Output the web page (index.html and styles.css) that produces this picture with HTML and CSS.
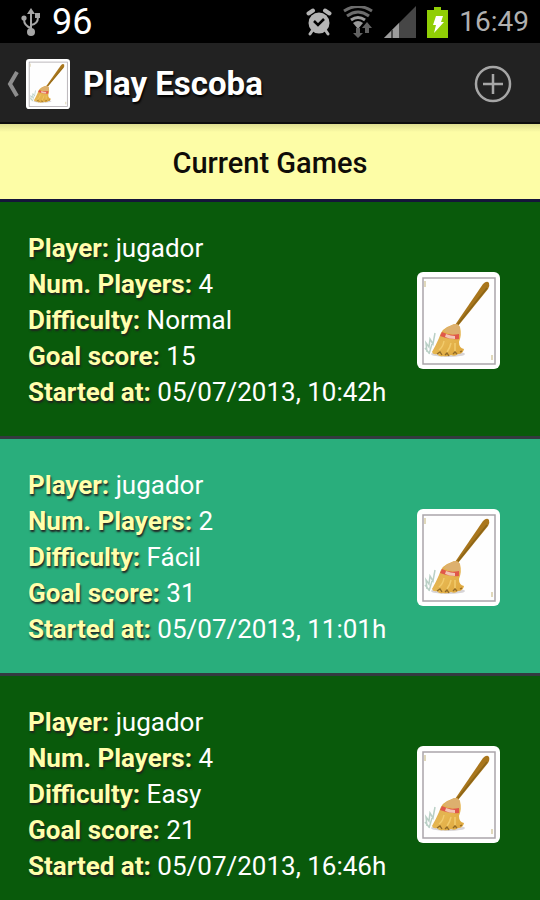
FILE: index.html
```html
<!DOCTYPE html>
<html lang="en">
<head>
<meta charset="utf-8">
<meta name="viewport" content="width=device-width, initial-scale=1">
<title>Play Escoba</title>
<link rel="stylesheet" href="styles.css">
</head>
<body>
<svg class="defs" aria-hidden="true">
  <defs>
    <linearGradient id="straw" x1="0" y1="0" x2="1" y2="1">
      <stop offset="0" stop-color="#d9a852"/>
      <stop offset="0.5" stop-color="#e6b650"/>
      <stop offset="1" stop-color="#dda53a"/>
    </linearGradient>
    <symbol id="broom-card" viewBox="0 0 83 97">
      <rect width="83" height="97" rx="6" fill="#fff"/>
      <rect x="6" y="6" width="72" height="86" fill="#fefefe" stroke="#aaa5aa" stroke-width="1.5"/>
      <path d="M8 9v6M75 83v5" stroke="#d6cba5" stroke-width="1.5"/>
      <path d="M10 80l-1-9 3 4 1-8 3 5 2-11M12 82l3-10M8 76l4 5" fill="none" stroke="#a9c4b8" stroke-width="1.5" opacity=".8"/>
      <ellipse cx="31" cy="82" rx="17" ry="3" fill="#bdb7ba" opacity=".6"/>
      <path d="M38 53L66 12q4-4 6-1 1 3-1 6L41 54z" fill="#a9761c"/>
      <path d="M41 52L70 16" stroke="#8a6518" stroke-width="1.3"/>
      <path d="M35 53q5-3 8 2 2 8-1 15 0 6 5 7-1 5-6 5-3 3-7 1-4 2-8 1-4 1-6-2-4 1-5-2 4-7 7-14 2-10 13-13z" fill="url(#straw)"/>
      <path d="M35 53q5-3 8 2l0 8q-9 0-16-4 3-4 8-6z" fill="#ddb06e"/>
      <path d="M25 60q7 4 17 2v5q-10 1-19-3z" fill="#e0574a"/>
      <path d="M29 62q5 2 9 2v3q-6 0-10-2z" fill="#f3c6b4"/>
      <path d="M27 69q-1 6-5 9M34 71q-1 5-4 9M38 71v8" fill="none" stroke="#f2cb6c" stroke-width="1.5"/>
      <path d="M20 82l3-2 2 3M28 83l2-2 2 3M36 82l2-2 2 2M43 80l2-1" fill="none" stroke="#906a28" stroke-width="1.3"/>
    </symbol>
  </defs>
</svg>

<div class="screen">
  <div class="status">
    <svg class="usb" viewBox="0 0 20 30" aria-hidden="true">
      <g fill="none" stroke="#a6a6a6" stroke-width="2">
        <path d="M10 5v20M10 21q-7-2-7-9M10 18q7-1 7-8"/>
      </g>
      <path d="M10 1l4 6H6z" fill="#a6a6a6"/>
      <circle cx="10" cy="25" r="4" fill="#a6a6a6"/>
      <circle cx="3" cy="11" r="2.6" fill="#a6a6a6"/>
      <path d="M14 6h5v5h-5z" fill="#a6a6a6"/>
    </svg>
    <span class="level">96</span>
    <svg class="alarm" viewBox="0 0 26 28" aria-hidden="true">
      <g fill="none" stroke="#b4b4b4" stroke-linecap="round">
        <path d="M2.500 5.500L7 2.500M23.500 5.500L19 2.500" stroke-width="4"/>
        <path d="M6 23l-2 3M20 23l2 3" stroke-width="3"/>
      </g>
      <circle cx="13" cy="15" r="10.500" fill="#b4b4b4"/>
      <path d="M8 13l4 4 6-6" fill="none" stroke="#000" stroke-width="2.500"/>
    </svg>
    <svg class="wifi" viewBox="0 0 30 32" aria-hidden="true">
      <g fill="none" stroke="#6c6c6c" stroke-width="3">
        <path d="M1 5q14-9 28 0M4 10q11-8 22 0"/>
        <path d="M8 14q7-5 14 0" stroke="#999"/>
      </g>
      <path d="M10 17q5-4 10 0l-5 6z" fill="#9a9a9a"/>
      <path d="M13 22h4v5h3l-5 5-5-5h3zM22 27v-5h-3l5-6 5 6h-3v5z" fill="#626262"/>
    </svg>
    <svg class="signal" viewBox="0 0 32 32" aria-hidden="true">
      <path d="M0 32L32 0v32z" fill="#464646"/>
      <path d="M0 32L15 17v15z" fill="#9c9c9c"/>
      <path d="M8 24v8" stroke="#333" stroke-width="1.500"/>
    </svg>
    <svg class="battery" viewBox="0 0 21 31" aria-hidden="true">
      <path d="M7 0h7v3h7v28H0V3h7z" fill="#90ce05"/>
      <path d="M9 9h7l-2 6h3L7 26l2-8H6z" fill="#fff"/>
    </svg>
    <time class="clock">16:49</time>
  </div>

  <header class="bar">
    <a class="home" href="#" aria-label="Back">
      <svg class="chevron" viewBox="0 0 14 26" aria-hidden="true">
        <path d="M11 1L4 13l7 12" fill="none" stroke="#8d8d8d" stroke-width="4"/>
      </svg>
      <svg class="logo" viewBox="0 0 83 97" preserveAspectRatio="none" aria-hidden="true"><use href="#broom-card"/></svg>
    </a>
    <h1 class="title">Play Escoba</h1>
    <button class="add" type="button" aria-label="New game">
      <svg viewBox="0 0 38 38" aria-hidden="true">
        <circle cx="19" cy="19" r="17" fill="none" stroke="#a6a6a6" stroke-width="2.500"/>
        <path d="M19 9v20M9 19h20" stroke="#a6a6a6" stroke-width="2.500"/>
      </svg>
    </button>
  </header>

  <h2 class="section">Current Games</h2>

  <ul class="games">
    <li class="game">
      <dl class="info">
        <div><dt>Player:</dt> <dd>jugador</dd></div>
        <div><dt>Num. Players:</dt> <dd>4</dd></div>
        <div><dt>Difficulty:</dt> <dd>Normal</dd></div>
        <div><dt>Goal score:</dt> <dd>15</dd></div>
        <div><dt>Started at:</dt> <dd>05/07/2013, 10:42h</dd></div>
      </dl>
      <svg class="card" aria-hidden="true"><use href="#broom-card"/></svg>
    </li>
    <li class="game game-alt">
      <dl class="info">
        <div><dt>Player:</dt> <dd>jugador</dd></div>
        <div><dt>Num. Players:</dt> <dd>2</dd></div>
        <div><dt>Difficulty:</dt> <dd>Fácil</dd></div>
        <div><dt>Goal score:</dt> <dd>31</dd></div>
        <div><dt>Started at:</dt> <dd>05/07/2013, 11:01h</dd></div>
      </dl>
      <svg class="card" aria-hidden="true"><use href="#broom-card"/></svg>
    </li>
    <li class="game">
      <dl class="info">
        <div><dt>Player:</dt> <dd>jugador</dd></div>
        <div><dt>Num. Players:</dt> <dd>4</dd></div>
        <div><dt>Difficulty:</dt> <dd>Easy</dd></div>
        <div><dt>Goal score:</dt> <dd>21</dd></div>
        <div><dt>Started at:</dt> <dd>05/07/2013, 16:46h</dd></div>
      </dl>
      <svg class="card" aria-hidden="true"><use href="#broom-card"/></svg>
    </li>
  </ul>
</div>
</body>
</html>
```

FILE: styles.css
```css
* {
  box-sizing: border-box;
  margin: 0;
  padding: 0;
}

body {
  background: #095a0b;
  color: #fff;
  font-family: Roboto, "Liberation Sans", sans-serif;
  font-size: 26px;
  line-height: 36px;
}

svg {
  display: block;
  flex: none;
}

.defs {
  position: absolute;
  width: 0;
  height: 0;
}

.screen {
  display: flex;
  flex-direction: column;
  height: 100vh;
}

.status {
  display: flex;
  flex: none;
  align-items: center;
  gap: 11px;
  padding: 4px 11px 3px 21px;
  background: #000;
}

.usb {
  width: 20px;
  height: 30px;
}

.level {
  margin-right: auto;
  font-size: 36px;
}

.alarm {
  width: 26px;
  height: 28px;
}

.wifi {
  width: 30px;
  height: 32px;
}

.signal {
  width: 32px;
  height: 32px;
}

.battery {
  width: 21px;
  height: 31px;
}

.clock {
  color: #b0b0b0;
  font-size: 28px;
}

.bar {
  display: flex;
  flex: none;
  align-items: center;
  gap: 13px;
  padding: 16px 28px 13px 6px;
  border-bottom: 2px solid #0b0b0d;
  background: #222;
}

.home {
  display: flex;
  align-items: center;
  gap: 6px;
}

.chevron {
  width: 14px;
  height: 26px;
}

.logo {
  width: 44px;
  height: 50px;
}

.title {
  flex: 1;
  font-size: 33px;
  font-weight: 700;
  text-shadow: 1px 2px 2px #000;
}

.add {
  border: 0;
  background: none;
}

.add svg {
  width: 38px;
  height: 38px;
}

.section {
  flex: none;
  padding: 21px 0 18px;
  border-bottom: 3px solid #15153a;
  background: linear-gradient(#dcdc90, #fdfda6 8px);
  color: #100d08;
  font-size: 29px;
  font-weight: 500;
  text-align: center;
}

.games {
  flex: 1;
  min-height: 0;
  overflow: hidden;
  list-style: none;
}

.game {
  display: flex;
  align-items: center;
  justify-content: space-between;
  padding: 28px 40px 26px 28px;
  border-bottom: 3px solid #343a40;
  background: #095a0b;
}

.game-alt {
  background: #29ae7c;
}

.info dt,
.info dd {
  display: inline;
}

.info dt {
  color: #ffffab;
  font-weight: 700;
  text-shadow: 1px 2px 2px #222;
}

.card {
  width: 83px;
  height: 97px;
}
```
